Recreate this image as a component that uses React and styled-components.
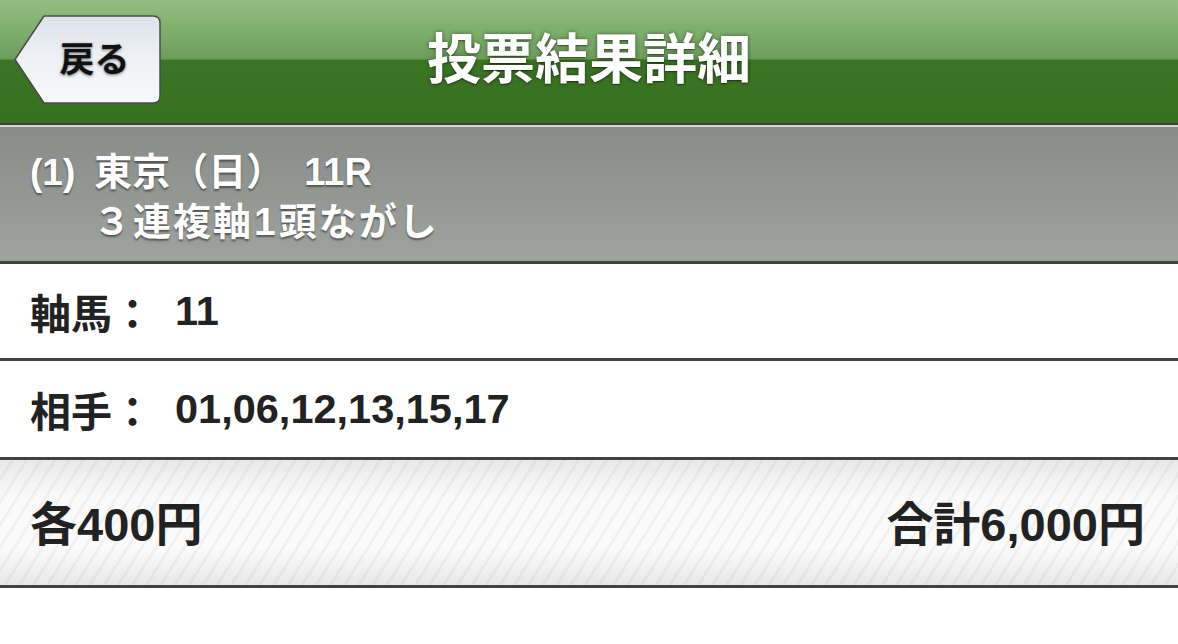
import React from "react";
import styled, { createGlobalStyle } from "styled-components";

const Global = createGlobalStyle`
  html, body { margin: 0; padding: 0; background: #ffffff; }
  body {
    font-family: "Liberation Sans", "Noto Sans CJK JP", sans-serif;
    -webkit-font-smoothing: antialiased;
  }
`;

const Page = styled.div`
  width: 1178px;
  min-height: 644px;
  background: #ffffff;
  display: flex;
  flex-direction: column;
`;

const Header = styled.header`
  height: 123px;
  display: grid;
  grid-template-columns: 1fr auto 1fr;
  align-items: center;
  background: linear-gradient(
    to bottom,
    #93be81 0px,
    #7eaf6c 30px,
    #6c9d5b 59px,
    #3b7525 60px,
    #37701f 123px
  );
  border-bottom: 2px solid #3c3f3c;
`;

const Title = styled.h1`
  margin: 0;
  padding-bottom: 12px;
  font-family: "Noto Sans CJK JP", sans-serif;
  font-weight: 700;
  font-size: 54px;
  line-height: 1;
  color: #ffffff;
  text-shadow: 0 0 4px rgba(0, 0, 0, 0.45), 0 1px 1px rgba(0, 0, 0, 0.35);
`;

const BackButton = styled.button`
  position: relative;
  justify-self: start;
  margin-left: 14px;
  margin-bottom: 4px;
  width: 147px;
  height: 89px;
  padding: 0 0 0 30px;
  border: none;
  background: transparent;
  display: flex;
  align-items: center;
  justify-content: center;
  cursor: pointer;
`;

const ButtonShape = styled.svg`
  position: absolute;
  inset: 0;
  width: 100%;
  height: 100%;
  overflow: visible;
`;

const ButtonLabel = styled.span`
  position: relative;
  font-family: "Noto Sans CJK JP", sans-serif;
  font-weight: 700;
  font-size: 35px;
  line-height: 1;
  color: #111111;
  margin-left: -16px;
  margin-bottom: 6px;
  text-shadow: 0 1px 3px rgba(0, 0, 0, 0.55);
`;

const RaceInfo = styled.section`
  border-top: 2px solid #d4d8d4;
  background: linear-gradient(to bottom, #888c88, #9ea39e);
  padding: 17px 30px 17px;
  border-bottom: 3px solid #424242;
  display: flex;
  flex-direction: column;
  color: #ffffff;
  font-weight: 700;
  font-size: 38px;
  text-shadow: 0 2px 2px rgba(0, 0, 0, 0.45);
`;

const InfoLine = styled.div`
  height: 50px;
  line-height: 50px;
  display: flex;
  align-items: baseline;
  padding-left: ${(p) => p.$indent || 0}px;
  white-space: pre;
`;

const Num = styled.span`
  font-family: "Liberation Sans", sans-serif;
  font-size: ${(p) => p.$size || 38}px;
  margin-right: ${(p) => p.$gap || 0}px;
  margin-left: ${(p) => p.$lead || 0}px;
`;

const Cjk = styled.span`
  font-family: "Noto Sans CJK JP", sans-serif;
  letter-spacing: ${(p) => p.$spacing || 0}px;
`;

const DetailRow = styled.div`
  height: ${(p) => p.$h}px;
  display: flex;
  align-items: center;
  padding-left: 30px;
  border-bottom: 3px solid #424242;
  color: #222222;
  font-weight: 700;
`;

const Label = styled.span`
  font-family: "Noto Sans CJK JP", sans-serif;
  font-size: 41px;
  width: 145px;
  flex: none;
`;

const Value = styled.span`
  font-family: "Liberation Sans", sans-serif;
  font-size: 41.5px;
`;

const Summary = styled.div`
  height: 121px;
  display: flex;
  align-items: center;
  justify-content: space-between;
  padding: 0 33px 4px 30px;
  border-bottom: 3px solid #424242;
  color: #222222;
  font-weight: 700;
  font-size: 47px;
  background:
    repeating-linear-gradient(
      122deg,
      rgba(255, 255, 255, 0) 0px,
      rgba(255, 255, 255, 0) 9px,
      rgba(0, 0, 0, 0.04) 9px,
      rgba(0, 0, 0, 0.04) 12px
    ),
    linear-gradient(to bottom, #e9e9e9 0%, #fafafa 30%, #fbfbfb 70%, #e8e8e8 100%);
`;

const Amount = styled.span`
  display: flex;
  align-items: center;
  font-family: "Liberation Sans", "Noto Sans CJK JP", sans-serif;
`;

export default function App() {
  return (
    <Page>
      <Global />
      <Header>
        <BackButton>
          <ButtonShape viewBox="0 0 147 89" preserveAspectRatio="none">
            <defs>
              <linearGradient id="btnFill" x1="0" y1="0" x2="0" y2="1">
                <stop offset="0" stopColor="#dde3ec" />
                <stop offset="0.5" stopColor="#eef1f5" />
                <stop offset="1" stopColor="#f8f9fb" />
              </linearGradient>
            </defs>
            <path
              d="M1 44.5 L30 1 L139 1 Q146 1 146 8 L146 81 Q146 88 139 88 L30 88 Z"
              fill="url(#btnFill)"
              stroke="#4a4d4a"
              strokeWidth="1.5"
              strokeLinejoin="round"
            />
          </ButtonShape>
          <ButtonLabel>戻る</ButtonLabel>
        </BackButton>
        <Title>投票結果詳細</Title>
        <div />
      </Header>

      <RaceInfo>
        <InfoLine>
          <Num $size={37} $gap={19}>(1)</Num>
          <Cjk>東京（日）</Cjk>
          <Num $size={38} $lead={20}>11R</Num>
        </InfoLine>
        <InfoLine $indent={63}>
          <Cjk $spacing={2}>３連複軸</Cjk>
          <Num $size={39} $gap={3} $lead={1}>1</Num>
          <Cjk $spacing={2}>頭ながし</Cjk>
        </InfoLine>
      </RaceInfo>

      <DetailRow $h={94}>
        <Label>軸馬：</Label>
        <Value>11</Value>
      </DetailRow>
      <DetailRow $h={96}>
        <Label>相手：</Label>
        <Value>01,06,12,13,15,17</Value>
      </DetailRow>

      <Summary>
        <Amount>各400円</Amount>
        <Amount>合計6,000円</Amount>
      </Summary>
    </Page>
  );
}
